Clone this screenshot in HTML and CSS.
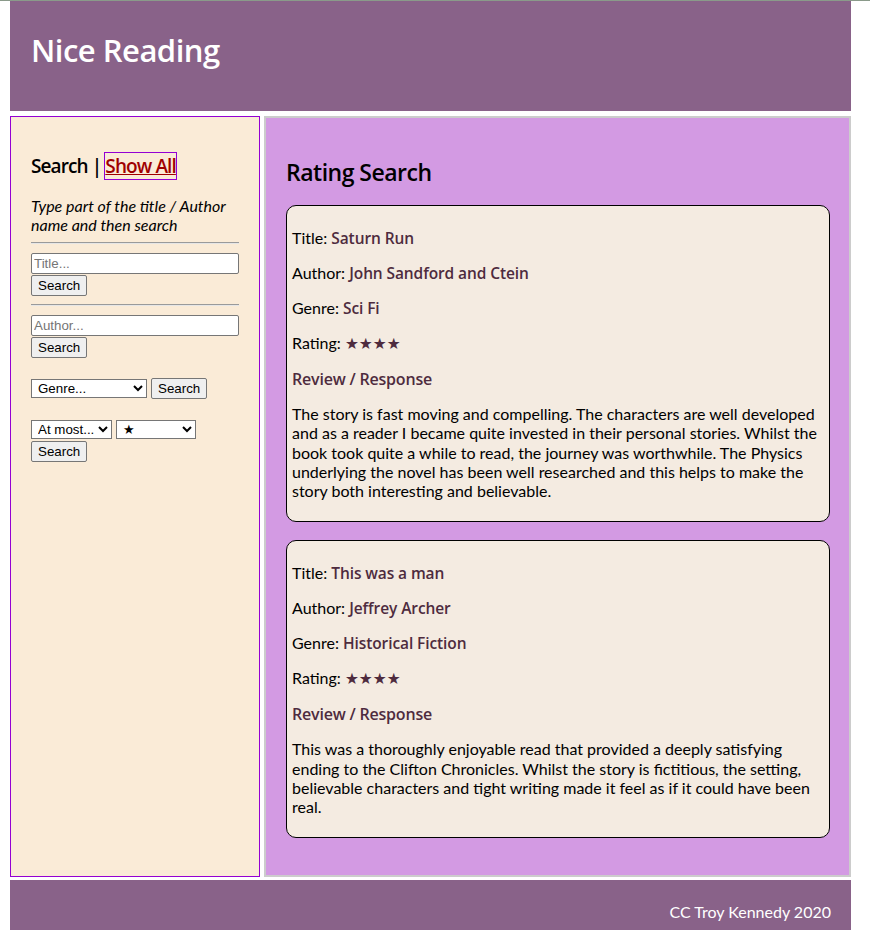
FILE: index.html
```html
<!DOCTYPE html>
<html lang="en">
<head>
<meta charset="utf-8">
<title>Nice Reading</title>
<link rel="stylesheet" href="styles.css">
</head>
<body>
<div class="page">
  <header class="site-header">
    <h1 class="site-title">Nice Reading</h1>
  </header>
  <div class="main">
    <aside class="sidebar">
      <h3 class="side-title">Search | <a href="#" class="show-all">Show All</a></h3>
      <p class="hint">Type part of the title / Author name and then search</p>
      <hr class="rule">
      <form class="f-block">
        <input class="txt" type="text" placeholder="Title...">
        <button class="btn" type="button">Search</button>
      </form>
      <hr class="rule">
      <form class="f-block f-author">
        <input class="txt" type="text" placeholder="Author...">
        <button class="btn" type="button">Search</button>
      </form>
      <form class="f-inline f-genre">
        <select class="sel sel-genre"><option>Genre...</option></select>
        <button class="btn btn-inline" type="button">Search</button>
      </form>
      <form class="f-rating">
        <div class="row">
          <select class="sel sel-most"><option>At most...</option></select>
          <select class="sel sel-star"><option>&#9733;</option></select>
        </div>
        <button class="btn" type="button">Search</button>
      </form>
    </aside>
    <section class="content">
      <h2 class="content-title">Rating Search</h2>
      <article class="card">
        <p class="line">Title: <span class="val">Saturn Run</span></p>
        <p class="line">Author: <span class="val">John Sandford and Ctein</span></p>
        <p class="line">Genre: <span class="val">Sci Fi</span></p>
        <p class="line">Rating: <span class="stars">&#9733;&#9733;&#9733;&#9733;</span></p>
        <h4 class="review-title">Review / Response</h4>
        <p class="review">The story is fast moving and compelling. The characters are well developed and as a reader I became quite invested in their personal stories. Whilst the book took quite a while to read, the journey was worthwhile. The Physics underlying the novel has been well researched and this helps to make the story both interesting and believable.</p>
      </article>
      <article class="card">
        <p class="line">Title: <span class="val">This was a man</span></p>
        <p class="line">Author: <span class="val">Jeffrey Archer</span></p>
        <p class="line">Genre: <span class="val">Historical Fiction</span></p>
        <p class="line">Rating: <span class="stars">&#9733;&#9733;&#9733;&#9733;</span></p>
        <h4 class="review-title">Review / Response</h4>
        <p class="review">This was a thoroughly enjoyable read that provided a deeply satisfying ending to the Clifton Chronicles. Whilst the story is fictitious, the setting, believable characters and tight writing made it feel as if it could have been real.</p>
      </article>
    </section>
  </div>
  <footer class="site-footer">
    <p class="credit">CC Troy Kennedy 2020</p>
  </footer>
</div>
</body>
</html>
```
FILE: styles.css
```css
html, body {
  margin: 0;
  padding: 0;
}
body {
  background: #ffffff;
  border-top: 1px solid #8a9a8a;
  font-family: "Lato", "Liberation Sans", sans-serif;
  font-size: 16px;
  color: #000;
}
.page {
  width: 841px;
  margin-left: 10px;
}
.site-header {
  background: #896289;
  height: 110px;
  padding: 0 21px;
  box-sizing: border-box;
  display: flex;
  align-items: flex-start;
}
.site-title {
  margin: 0;
  padding-top: 29px;
  font-family: "Open Sans", sans-serif;
  font-weight: 600;
  font-size: 31px;
  line-height: 40px;
  color: #ffffff;
  letter-spacing: -0.5px;
}
.main {
  display: flex;
  gap: 4px;
  margin-top: 5px;
  align-items: stretch;
}
.sidebar {
  width: 250px;
  box-sizing: border-box;
  background: #faebd7;
  border: 1px solid #9400d3;
  padding: 20px 20px 20px 20px;
}
.side-title {
  margin: 17px 0 0 0;
  font-family: "Open Sans", sans-serif;
  font-weight: 600;
  font-size: 19px;
  line-height: 24px;
  letter-spacing: -0.9px;
}
.show-all {
  color: #a00000;
  text-decoration: underline;
  outline: 1px solid #9400d3;
  outline-offset: 0;
}
.hint {
  font-style: italic;
  margin: 18px 0 0 0;
  line-height: 19px;
}
.rule {
  margin: 8px 0;
  border: 0;
  border-top: 1px solid #9a9a9a;
  border-bottom: 1px solid #e6e6e6;
  height: 0;
}
.f-block {
  margin: 0;
  padding-top: 1px;
}
.txt {
  display: block;
  width: 208px;
  box-sizing: border-box;
  height: 21px;
  margin: 0;
  font-family: "Liberation Sans", Arial, sans-serif;
  font-size: 13.33px;
  padding: 1px 2px;
  border: 1px solid #767676;
  border-radius: 2px;
  background: #fff;
}
.btn {
  display: block;
  margin: 1px 0 0 0;
  height: 21px;
  padding: 1px 6px;
  font-family: "Liberation Sans", Arial, sans-serif;
  font-size: 13.33px;
  color: #000;
  background: #efefef;
  border: 1px solid #767676;
  border-radius: 2px;
}
.btn-inline {
  display: inline-block;
  margin: 0 0 0 1px;
  vertical-align: middle;
}
.f-genre {
  margin: 20px 0 0 0;
  display: flex;
  align-items: center;
  gap: 3px;
}
.f-rating {
  margin: 21px 0 0 0;
}
.row {
  display: flex;
  gap: 4px;
}
.sel {
  height: 19px;
  font-family: "Liberation Sans", Arial, sans-serif;
  font-size: 13.33px;
  color: #000;
  background: #fff;
  border: 1px solid #767676;
  border-radius: 0;
  padding: 0 0 0 2px;
  margin: 0;
}
.sel-genre { width: 116px; }
.sel-most { width: 81px; }
.sel-star { width: 80px; }
.f-rating .btn { margin-top: 2px; }
.content {
  flex: 1;
  background: #d39ae3;
  border: 2px solid #cccccc;
  padding: 20px 19px 19px 20px;
}
.content-title {
  margin: 20px 0 19px 0;
  font-family: "Open Sans", sans-serif;
  font-weight: 600;
  font-size: 23px;
  line-height: 28px;
  letter-spacing: -0.5px;
}
.card {
  background: #f4ebe1;
  border: 1px solid #000;
  border-radius: 10px;
  padding: 6px 5px 5px 5px;
  margin-bottom: 18px;
}
.line {
  margin: 16px 0;
  line-height: 19px;
}
.val {
  font-family: "Open Sans", sans-serif;
  font-weight: 600;
  font-size: 15.5px;
  line-height: 14px;
  letter-spacing: -0.1px;
  color: #4e2b3e;
}
.stars {
  color: #4e2b3e;
  font-family: "DejaVu Sans", sans-serif;
  font-size: 15.5px;
  line-height: 14px;
}
.review-title {
  margin: 18px 0 15px 0;
  font-family: "Open Sans", sans-serif;
  font-weight: 600;
  font-size: 16px;
  line-height: 19px;
  letter-spacing: -0.2px;
  color: #4e2b3e;
}
.review {
  margin: 0 0 16px 0;
  line-height: 19.25px;
}
.site-footer {
  background: #896289;
  margin-top: 3px;
  padding: 6px 20px 10px 20px;
  text-align: right;
}
.credit {
  margin: 16px 0;
  color: #fff;
  line-height: 19px;
}
```
